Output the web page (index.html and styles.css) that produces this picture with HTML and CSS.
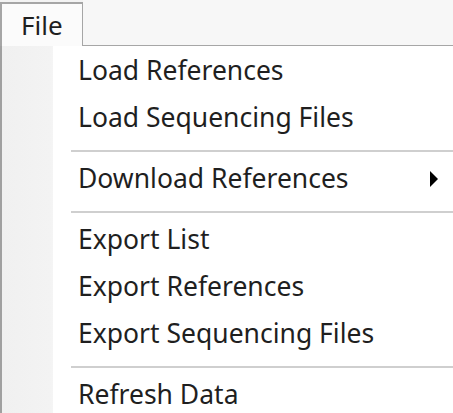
FILE: index.html
```html
<!DOCTYPE html>
<html>
<head>
<meta charset="utf-8">
<link rel="stylesheet" href="styles.css">
</head>
<body>
<div class="menubar">
  <div class="tab">File</div>
  <div class="bar-rest"></div>
</div>
<div class="menu">
  <div class="item">Load References</div>
  <div class="item">Load Sequencing Files</div>
  <div class="sep"></div>
  <div class="item has-sub">Download References
    <svg class="arrow" width="10" height="18" viewBox="0 0 10 18"><path d="M1 1 L9 9 L1 17 Z" fill="#000"/></svg>
  </div>
  <div class="sep"></div>
  <div class="item">Export List</div>
  <div class="item">Export References</div>
  <div class="item">Export Sequencing Files</div>
  <div class="sep"></div>
  <div class="item">Refresh Data</div>
</div>
</body>
</html>
```
FILE: styles.css
```css
html, body {
  margin: 0;
  padding: 0;
  background: #ffffff;
}

body {
  width: 453px;
  height: 413px;
  overflow: hidden;
  display: flex;
  flex-direction: column;
  font-family: "Noto Sans", "Open Sans", sans-serif;
  color: #1f1f1f;
}

.menubar {
  display: flex;
  flex: none;
  height: 46px;
  background: #f3f3f3;
}

.tab {
  box-sizing: border-box;
  margin-top: 2px;
  width: 83px;
  height: 44px;
  border: 2px solid #a6a6a6;
  border-bottom: none;
  border-right-width: 1px;
  background: #fbfbfb;
  font-size: 26px;
  line-height: 42px;
  padding-left: 19px;
}

.bar-rest {
  flex: 1;
  height: 45px;
  background: #f7f7f7;
  border-bottom: 1px solid #a6a6a6;
}

.menu {
  flex: 1;
  min-height: 0;
  overflow: hidden;
  display: flex;
  flex-direction: column;
  border-left: 2px solid #a0a0a0;
  padding-top: 4px;
  background: linear-gradient(to right, #f0f0f0 0, #f3f3f3 48px, #f5f5f5 51px, #ffffff 51px);
}

.item {
  flex: none;
  position: relative;
  height: 47px;
  line-height: 40px;
  padding-left: 76px;
  font-size: 26.5px;
}

.arrow {
  position: absolute;
  left: 427px;
  top: 12px;
}

.sep {
  flex: none;
  height: 14px;
  margin-left: 69px;
  display: flex;
  align-items: center;
}

.sep::before {
  content: "";
  display: block;
  width: 100%;
  height: 2px;
  background: #cfcfcf;
}
```
